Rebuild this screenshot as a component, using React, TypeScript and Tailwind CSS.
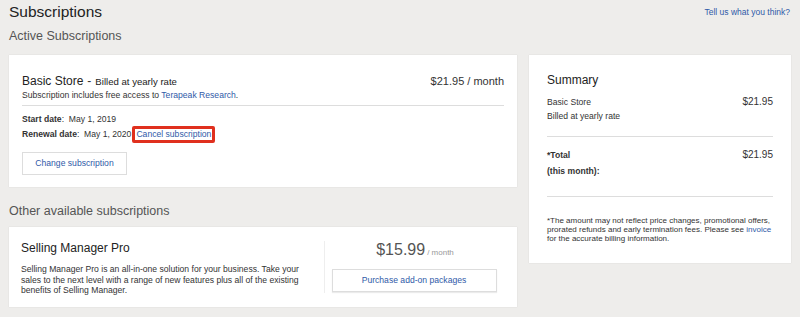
export default function App() {
  return (
    <main
      className="w-[800px] h-[317px] overflow-hidden bg-[#eeedeb] text-[#333] pl-[9px] pr-[9px]"
      style={{ fontFamily: '"Liberation Sans", Arial, sans-serif' }}
    >
      {/* Header */}
      <div className="flex items-start justify-between h-[27px]">
        <h1 className="text-[15.5px] leading-[20px] mt-[2px] text-[#222]">Subscriptions</h1>
        <a className="text-[8.5px] leading-[11px] mt-[7px] mr-[1px] text-[#2f5aa8]">Tell us what you think?</a>
      </div>

      <div className="flex gap-[12px]">
        {/* Left column */}
        <div className="w-[508px] flex flex-col">
          <h2 className="text-[12.5px] leading-[18px] text-[#555] font-light h-[28px]">Active Subscriptions</h2>

          {/* Active subscription card */}
          <section className="bg-white h-[132px] px-[13px] pt-[17px] shadow-[0_0_1px_rgba(0,0,0,0.15)]">
            <div className="flex items-baseline justify-between h-[16px]">
              <div className="flex items-baseline">
                <span className="text-[12px] leading-[16px] text-[#222]">Basic Store</span>
                <span className="text-[12px] mx-[4px]">-</span>
                <span className="text-[9.6px] text-[#222]">Billed at yearly rate</span>
              </div>
              <span className="text-[11px] text-[#333]">$21.95 / month</span>
            </div>
            <p className="text-[8.6px] leading-[12px] mt-[1px] text-[#333]">
              Subscription includes free access to <a className="text-[#2f5aa8]">Terapeak Research</a>.
            </p>
            <div className="h-px bg-[#ddd] mt-[4px]" />
            <div className="text-[8.6px] mt-[6px] text-[#333]">
              <div className="h-[15px] leading-[15px]">
                <span className="font-bold">Start date</span>:&nbsp; May 1, 2019
              </div>
              <div className="h-[15px] flex items-center">
                <span className="font-bold">Renewal date</span>:&nbsp; May 1, 2020
                <span className="ml-[1px] border-[3px] border-[#e0301e] rounded-[2px] px-[1px] leading-[11px] text-[#2f5aa8]">
                  Cancel subscription
                </span>
              </div>
            </div>
            <button className="mt-[10px] h-[23px] w-[105px] border border-[#ddd] bg-white text-[8.6px] text-[#2f5aa8]">
              Change subscription
            </button>
          </section>

          <h2 className="text-[12.5px] leading-[18px] text-[#555] font-light mt-[15px] h-[25px]">
            Other available subscriptions
          </h2>

          {/* Other subscription card */}
          <section className="bg-white h-[80px] flex shadow-[0_0_1px_rgba(0,0,0,0.15)]">
            <div className="w-[315px] pl-[12px] pt-[13px]">
              <h3 className="text-[12px] leading-[16px] text-[#222]">Selling Manager Pro</h3>
              <p className="w-[290px] text-[8.6px] leading-[10.5px] mt-[8px] text-[#333]">
                Selling Manager Pro is an all-in-one solution for your business. Take your sales to the next level with a
                range of new features plus all of the existing benefits of Selling Manager.
              </p>
            </div>
            <div className="my-[14px] w-px bg-[#eee]" />
            <div className="flex-1 flex flex-col items-center pt-[14px] pr-[12px]">
              <div className="flex items-baseline">
                <span className="text-[16px] leading-[18px] text-[#555] font-light">$15.99</span>
                <span className="text-[8px] text-[#999] ml-[2px]">/ month</span>
              </div>
              <button className="mt-[10px] h-[23px] w-[165px] mr-[2px] border border-[#ddd] bg-white shadow-[0_1px_1px_rgba(0,0,0,0.08)] text-[8.6px] text-[#2f5aa8]">
                Purchase add-on packages
              </button>
            </div>
          </section>
        </div>

        {/* Summary */}
        <aside className="w-[262px] mt-[28px] h-[208px] bg-white px-[18px] pt-[17px] shadow-[0_0_1px_rgba(0,0,0,0.15)]">
          <h3 className="text-[12px] leading-[16px] text-[#222]">Summary</h3>
          <div className="flex justify-between text-[8.6px] leading-[14px] mt-[7px] text-[#333]">
            <span>Basic Store</span>
            <span className="text-[10px]">$21.95</span>
          </div>
          <div className="text-[8.6px] leading-[14px] text-[#333]">Billed at yearly rate</div>
          <div className="h-px bg-[#ddd] mt-[13px]" />
          <div className="flex justify-between text-[8.6px] leading-[16px] mt-[10px] text-[#333]">
            <span className="font-bold">*Total</span>
            <span className="text-[10px]">$21.95</span>
          </div>
          <div className="text-[8.6px] leading-[16px] font-bold text-[#333]">(this month):</div>
          <div className="h-px bg-[#ddd] mt-[17px]" />
          <p className="text-[8px] leading-[9px] mt-[19px] text-[#333]">
            *The amount may not reflect price changes, promotional offers, prorated refunds and early termination fees.
            Please see <a className="text-[#2f5aa8]">invoice</a> for the accurate billing information.
          </p>
        </aside>
      </div>
    </main>
  );
}
